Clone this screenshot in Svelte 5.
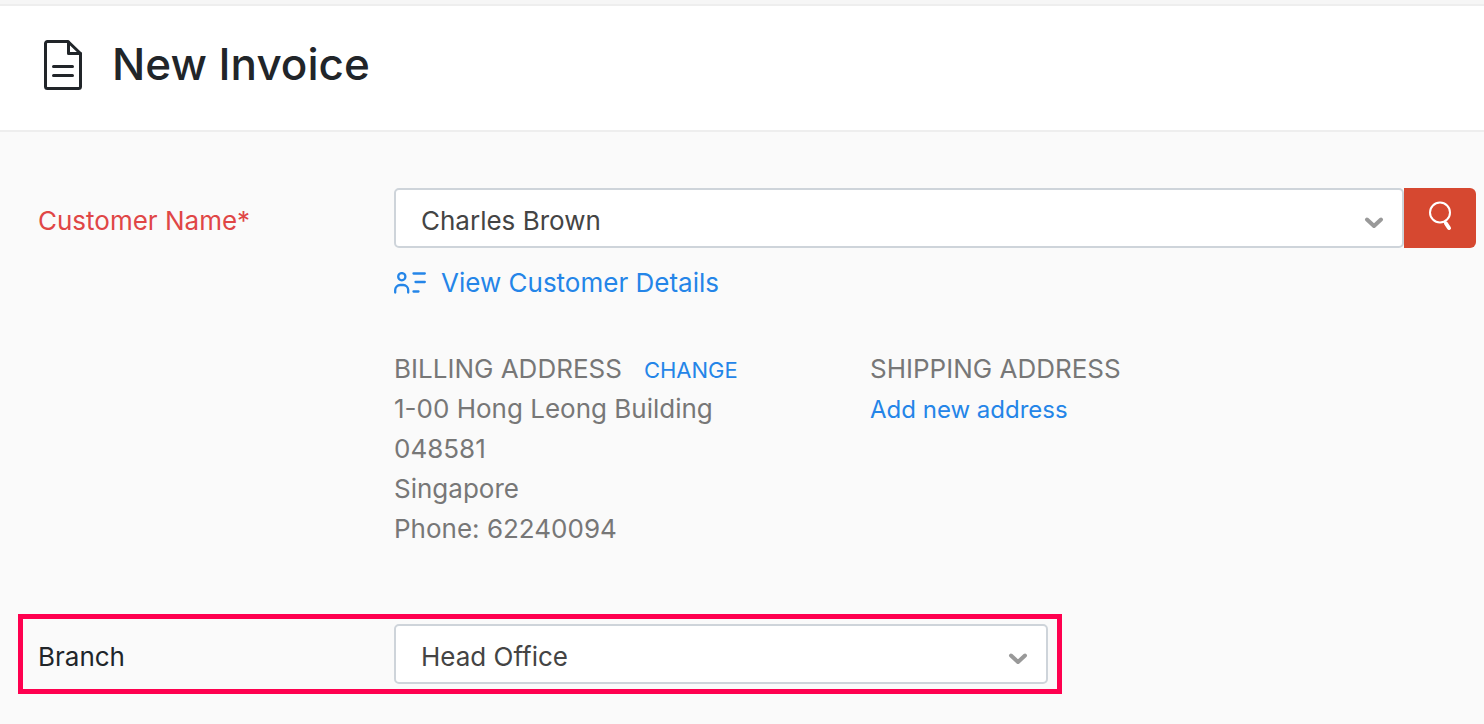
<script>
  const customers = ['Charles Brown'];
  const branches = ['Head Office'];
  const billing = ['1-00 Hong Leong Building', '048581', 'Singapore', 'Phone: 62240094'];

  let customer = $state('Charles Brown');
  let branch = $state('Head Office');
</script>

{#snippet chevron()}
  <svg class="chevron" width="20" height="12" viewBox="0 0 20 12" aria-hidden="true">
    <path d="M3 2.5l7 6.5 7-6.5" fill="none" stroke="#999" stroke-width="4" stroke-linecap="round" stroke-linejoin="round" />
  </svg>
{/snippet}

<div class="page">
  <div class="strip"></div>

  <header>
    <svg width="38" height="50" viewBox="0 0 38 50" fill="none" stroke="#212529" stroke-width="3" stroke-linejoin="round" stroke-linecap="round" aria-hidden="true">
      <path d="M3.5 1.5H24L36.5 13.5V46.5a2 2 0 0 1-2 2h-31a2 2 0 0 1-2-2v-43a2 2 0 0 1 2-2z" />
      <path d="M24.500 2v11.500h12" />
      <path d="M9.5 26.5h19M9.5 35.5h19" />
    </svg>
    <h1>New Invoice</h1>
  </header>

  <form onsubmit={(e) => e.preventDefault()}>
    <div class="row">
      <label class="required" for="customer">Customer Name*</label>
      <div class="field">
        <div class="group">
          <div class="select">
            <select id="customer" bind:value={customer}>
              {#each customers as c}<option>{c}</option>{/each}
            </select>
            {@render chevron()}
          </div>
          <button class="search" type="button" aria-label="Search customers">
            <svg width="24" height="30" viewBox="0 0 24 30" fill="none" stroke="#fff" stroke-linecap="round" aria-hidden="true">
              <circle cx="12" cy="11.5" r="10" stroke-width="2" />
              <path d="M17 21l1 1" stroke-width="2" />
              <path d="M18 22.5l3 4.5" stroke-width="4" />
            </svg>
          </button>
        </div>

        <a class="details" href="#details">
          <svg width="32" height="22" viewBox="0 0 32 22" fill="none" stroke="#2485e8" stroke-width="2.3" stroke-linecap="round" aria-hidden="true">
            <circle cx="7.8" cy="4.7" r="3.6" />
            <path d="M1.2 20.5v-2.500a5 5 0 0 1 5-5h3a5 5 0 0 1 5 5v2.500" />
            <path d="M19.500 1.500h11.300M21.500 10h9.300M19.500 19.500h5" />
          </svg>
          View Customer Details
        </a>

        <div class="addresses">
          <address>
            <div class="heading">BILLING ADDRESS <a class="change" href="#change">CHANGE</a></div>
            {#each billing as line}
              <div>{line}</div>
            {/each}
          </address>
          <address>
            <div>SHIPPING ADDRESS</div>
            <a class="add" href="#add">Add new address</a>
          </address>
        </div>
      </div>
    </div>

    <div class="row branch">
      <label for="branch">Branch</label>
      <div class="field select">
        <select id="branch" bind:value={branch}>
          {#each branches as b}<option>{b}</option>{/each}
        </select>
        {@render chevron()}
      </div>
    </div>
  </form>
</div>

<style>
  :global(body) {
    margin: 0;
    background: #fafafa;
  }
  .page {
    font-family: Inter, 'Liberation Sans', sans-serif;
    font-size: 26px;
    line-height: 40px;
    color: #212529;
  }
  .strip {
    height: 4px;
    background: #f6f6f6;
    border-bottom: 2px solid #eee;
  }
  header {
    display: flex;
    align-items: center;
    gap: 30px;
    padding: 30px 44px 36px;
    background: #fff;
    border-bottom: 2px solid #eee;
  }
  h1 {
    margin: 0;
    padding-bottom: 2px;
    font-size: 44px;
    line-height: 56px;
    font-weight: 500;
  }
  form { padding: 56px 8px 30px 18px; }
  .row {
    display: flex;
    align-items: flex-start;
    padding-left: 20px;
  }
  label {
    flex: 0 0 356px;
    padding: 13px 0 7px;
  }
  .required { color: #e04646; }
  .field { flex: 1; min-width: 0; }
  .group { display: flex; }
  .select {
    position: relative;
    flex: 1;
    min-width: 0;
  }
  select {
    display: block;
    width: 100%;
    height: 60px;
    box-sizing: border-box;
    padding: 6px 60px 0 25px;
    border: 2px solid #ced4da;
    border-radius: 5px;
    background: #fff;
    color: #444;
    font: inherit;
    appearance: none;
  }
  .chevron {
    position: absolute;
    right: 20px;
    top: 29px;
    pointer-events: none;
  }
  .search {
    width: 72px;
    height: 60px;
    padding: 0 0 4px;
    border: 0;
    border-radius: 0 6px 6px 0;
    background: #d64830;
    cursor: pointer;
  }
  .search svg { display: block; margin: 0 auto; }
  a { color: #2485e8; text-decoration: none; }
  a:hover { text-decoration: underline; }
  .details {
    display: inline-flex;
    align-items: center;
    gap: 15px;
    margin-top: 15px;
  }
  .addresses {
    display: grid;
    grid-template-columns: 476px 1fr;
    margin-top: 44px;
    color: #777;
  }
  address { font-style: normal; }
  .heading {
    display: flex;
    align-items: baseline;
    gap: 22px;
  }
  .change {
    font-size: 22px;
    line-height: 30px;
  }
  .add { font-size: 24px; }
  .branch {
    max-width: 1044px;
    box-sizing: border-box;
    margin-top: 65px;
    padding: 5px 9px 5px 15px;
    border: 5px solid #ff004f;
  }
</style>
